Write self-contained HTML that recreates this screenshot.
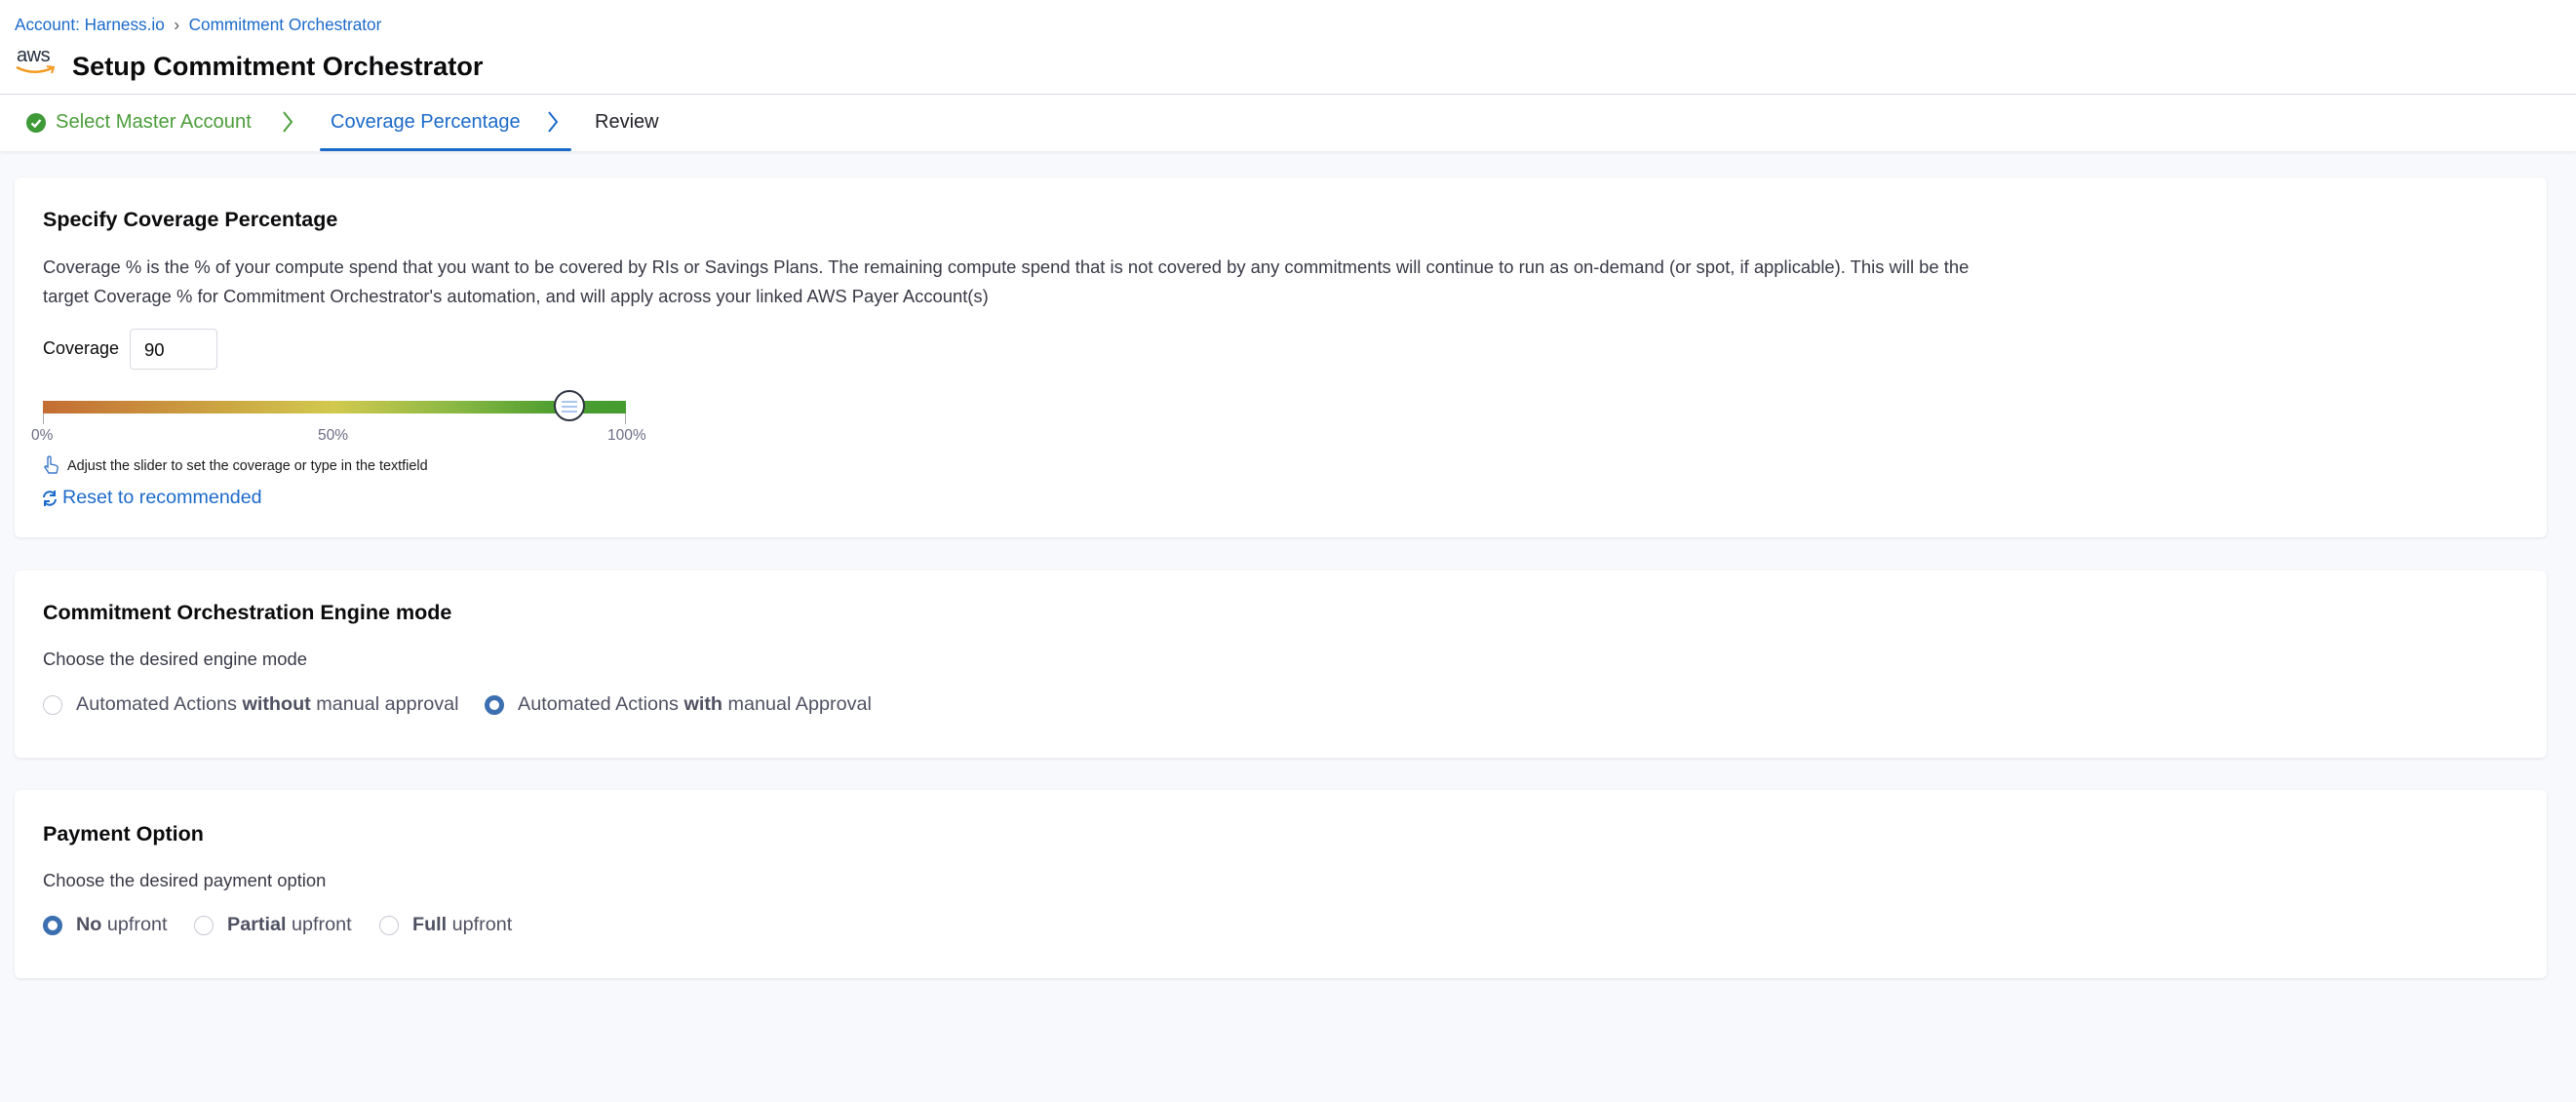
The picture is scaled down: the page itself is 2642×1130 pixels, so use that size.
<!DOCTYPE html>
<html><head><meta charset="utf-8"><style>
*{box-sizing:border-box;margin:0;padding:0}
body{width:2642px;height:1130px;background:#f8f9fc;font-family:"Liberation Sans",sans-serif;position:relative;overflow:hidden;color:#0b0b0d}
.abs{position:absolute;white-space:nowrap}
.hdr{position:absolute;left:0;top:0;width:2642px;height:155px;background:#fff;box-shadow:0 2px 4px rgba(0,0,0,.06)}
.card{position:absolute;left:15px;width:2597px;background:#fff;border-radius:6px;box-shadow:0 1px 3px rgba(40,41,61,.1)}
.ct{font-size:21.5px;font-weight:bold;color:#0b0b0d}
.sub{font-size:18.4px;color:#383946}
.radio{position:absolute;width:20px;height:20px;border-radius:50%;border:1.5px solid #c8c9d2;background:#fff}
.radio.on{border:5.5px solid #3c6fb0;background:#fff}
.rl{font-size:19.8px;color:#4f5162}
</style></head><body>
<div class="hdr"></div>
<div class="abs" style="left:15px;top:15px;font-size:17.2px;color:#1b6ac9">Account: Harness.io &nbsp;<span style="color:#555">›</span>&nbsp; Commitment Orchestrator</div>
<div class="abs" style="left:17px;top:46px;font-size:20px;color:#232f3e;letter-spacing:-0.5px">aws</div>
<svg class="abs" style="left:15px;top:66px" width="44" height="12" viewBox="0 0 44 12"><path d="M2 3 Q20 12 38 4" stroke="#f29a1f" stroke-width="2.5" fill="none"/><path d="M33 2 L40 3 L38 9" stroke="#f29a1f" stroke-width="2" fill="none"/></svg>
<div class="abs" style="left:74px;top:52px;font-size:27.2px;font-weight:bold">Setup Commitment Orchestrator</div>
<div class="abs" style="left:0;top:96px;width:2642px;height:1px;background:#d9dae2"></div>
<svg class="abs" style="left:27px;top:116px" width="20" height="20"><circle cx="10" cy="10" r="10" fill="#3e9a37"/><path d="M5.5 10.5 L8.8 13.5 L14.5 7" stroke="#fff" stroke-width="2.4" fill="none"/></svg>
<div class="abs" style="left:57px;top:114px;font-size:20.2px;color:#4c9e3b">Select Master Account</div>
<svg class="abs" style="left:288px;top:113px" width="14" height="24"><path d="M3 2 L11 12 L3 22" stroke="#4c9e3b" stroke-width="2" fill="none"/></svg>
<div class="abs" style="left:339px;top:114px;font-size:20px;color:#1b6ac9">Coverage Percentage</div>
<svg class="abs" style="left:560px;top:113px" width="14" height="24"><path d="M3 2 L11 12 L3 22" stroke="#1b6ac9" stroke-width="2" fill="none"/></svg>
<div class="abs" style="left:610px;top:114px;font-size:20px;color:#22222a">Review</div>
<div class="abs" style="left:328px;top:152px;width:258px;height:3px;background:#1b6ac9;border-radius:2px"></div>

<div class="card" style="top:182px;height:369px"></div>
<div class="abs ct" style="left:44px;top:213px">Specify Coverage Percentage</div>
<div class="abs sub" style="left:44px;top:259px;line-height:30px">Coverage % is the % of your compute spend that you want to be covered by RIs or Savings Plans. The remaining compute spend that is not covered by any commitments will continue to run as on-demand (or spot, if applicable). This will be the<br>target Coverage % for Commitment Orchestrator's automation, and will apply across your linked AWS Payer Account(s)</div>
<div class="abs" style="left:44px;top:347px;font-size:18px">Coverage</div>
<div class="abs" style="left:133px;top:337px;width:90px;height:42px;border:1px solid #d9dae2;border-radius:4px;font-size:18.5px;padding:10px 0 0 14px">90</div>
<div class="abs" style="left:44px;top:411px;width:598px;height:13px;background:linear-gradient(90deg,#c46d34 0%,#cba442 30%,#d2c94f 50%,#8cb944 70%,#4e9e30 88%,#449c2f 100%)"></div>
<div class="abs" style="left:44px;top:424px;width:1px;height:11px;background:#aaa"></div>
<div class="abs" style="left:641px;top:424px;width:1px;height:11px;background:#aaa"></div>
<div class="abs" style="left:568px;top:400px;width:32px;height:32px;border-radius:50%;background:#fff;border:2px solid #2d3340"></div>
<div class="abs" style="left:576px;top:411px;width:16px;height:2px;background:#a9c7ee"></div>
<div class="abs" style="left:576px;top:416px;width:16px;height:2px;background:#a9c7ee"></div>
<div class="abs" style="left:576px;top:421px;width:16px;height:2px;background:#a9c7ee"></div>
<div class="abs" style="left:32px;top:438px;font-size:15.5px;color:#6b6d85">0%</div>
<div class="abs" style="left:326px;top:438px;font-size:15.5px;color:#6b6d85">50%</div>
<div class="abs" style="left:623px;top:438px;font-size:15.5px;color:#6b6d85">100%</div>
<svg class="abs" style="left:44px;top:467px" width="18" height="20"><path d="M5 2 Q7 0 8 2 L8 9 L13 10 Q16 11 15 14 L14 18 L6 18 L2 12 Q2 10 5 12 Z" stroke="#3c78c8" stroke-width="1.4" fill="none"/></svg>
<div class="abs" style="left:69px;top:470px;font-size:14.4px;color:#1a1a1a">Adjust the slider to set the coverage or type in the textfield</div>
<svg class="abs" style="left:42px;top:502px" width="18" height="18" viewBox="0 0 18 18"><path d="M3 8 A6 6 0 0 1 14 5 M15 10 A6 6 0 0 1 4 13" stroke="#1b6ac9" stroke-width="2" fill="none"/><path d="M14 1 L14 6 L9 6" stroke="#1b6ac9" stroke-width="2" fill="none"/><path d="M4 17 L4 12 L9 12" stroke="#1b6ac9" stroke-width="2" fill="none"/></svg>
<div class="abs" style="left:64px;top:499px;font-size:19.7px;color:#1b6ac9">Reset to recommended</div>

<div class="card" style="top:585px;height:192px"></div>
<div class="abs ct" style="left:44px;top:616px">Commitment Orchestration Engine mode</div>
<div class="abs sub" style="left:44px;top:665px">Choose the desired engine mode</div>
<div class="radio" style="left:44px;top:713px"></div>
<div class="abs rl" style="left:78px;top:711px">Automated Actions <b>without</b> manual approval</div>
<div class="radio on" style="left:497px;top:713px"></div>
<div class="abs rl" style="left:531px;top:711px">Automated Actions <b>with</b> manual Approval</div>

<div class="card" style="top:810px;height:193px"></div>
<div class="abs ct" style="left:44px;top:843px">Payment Option</div>
<div class="abs sub" style="left:44px;top:892px">Choose the desired payment option</div>
<div class="radio on" style="left:44px;top:939px"></div>
<div class="abs rl" style="left:78px;top:937px"><b>No</b> upfront</div>
<div class="radio" style="left:199px;top:939px"></div>
<div class="abs rl" style="left:233px;top:937px"><b>Partial</b> upfront</div>
<div class="radio" style="left:389px;top:939px"></div>
<div class="abs rl" style="left:423px;top:937px"><b>Full</b> upfront</div>
</body></html>
